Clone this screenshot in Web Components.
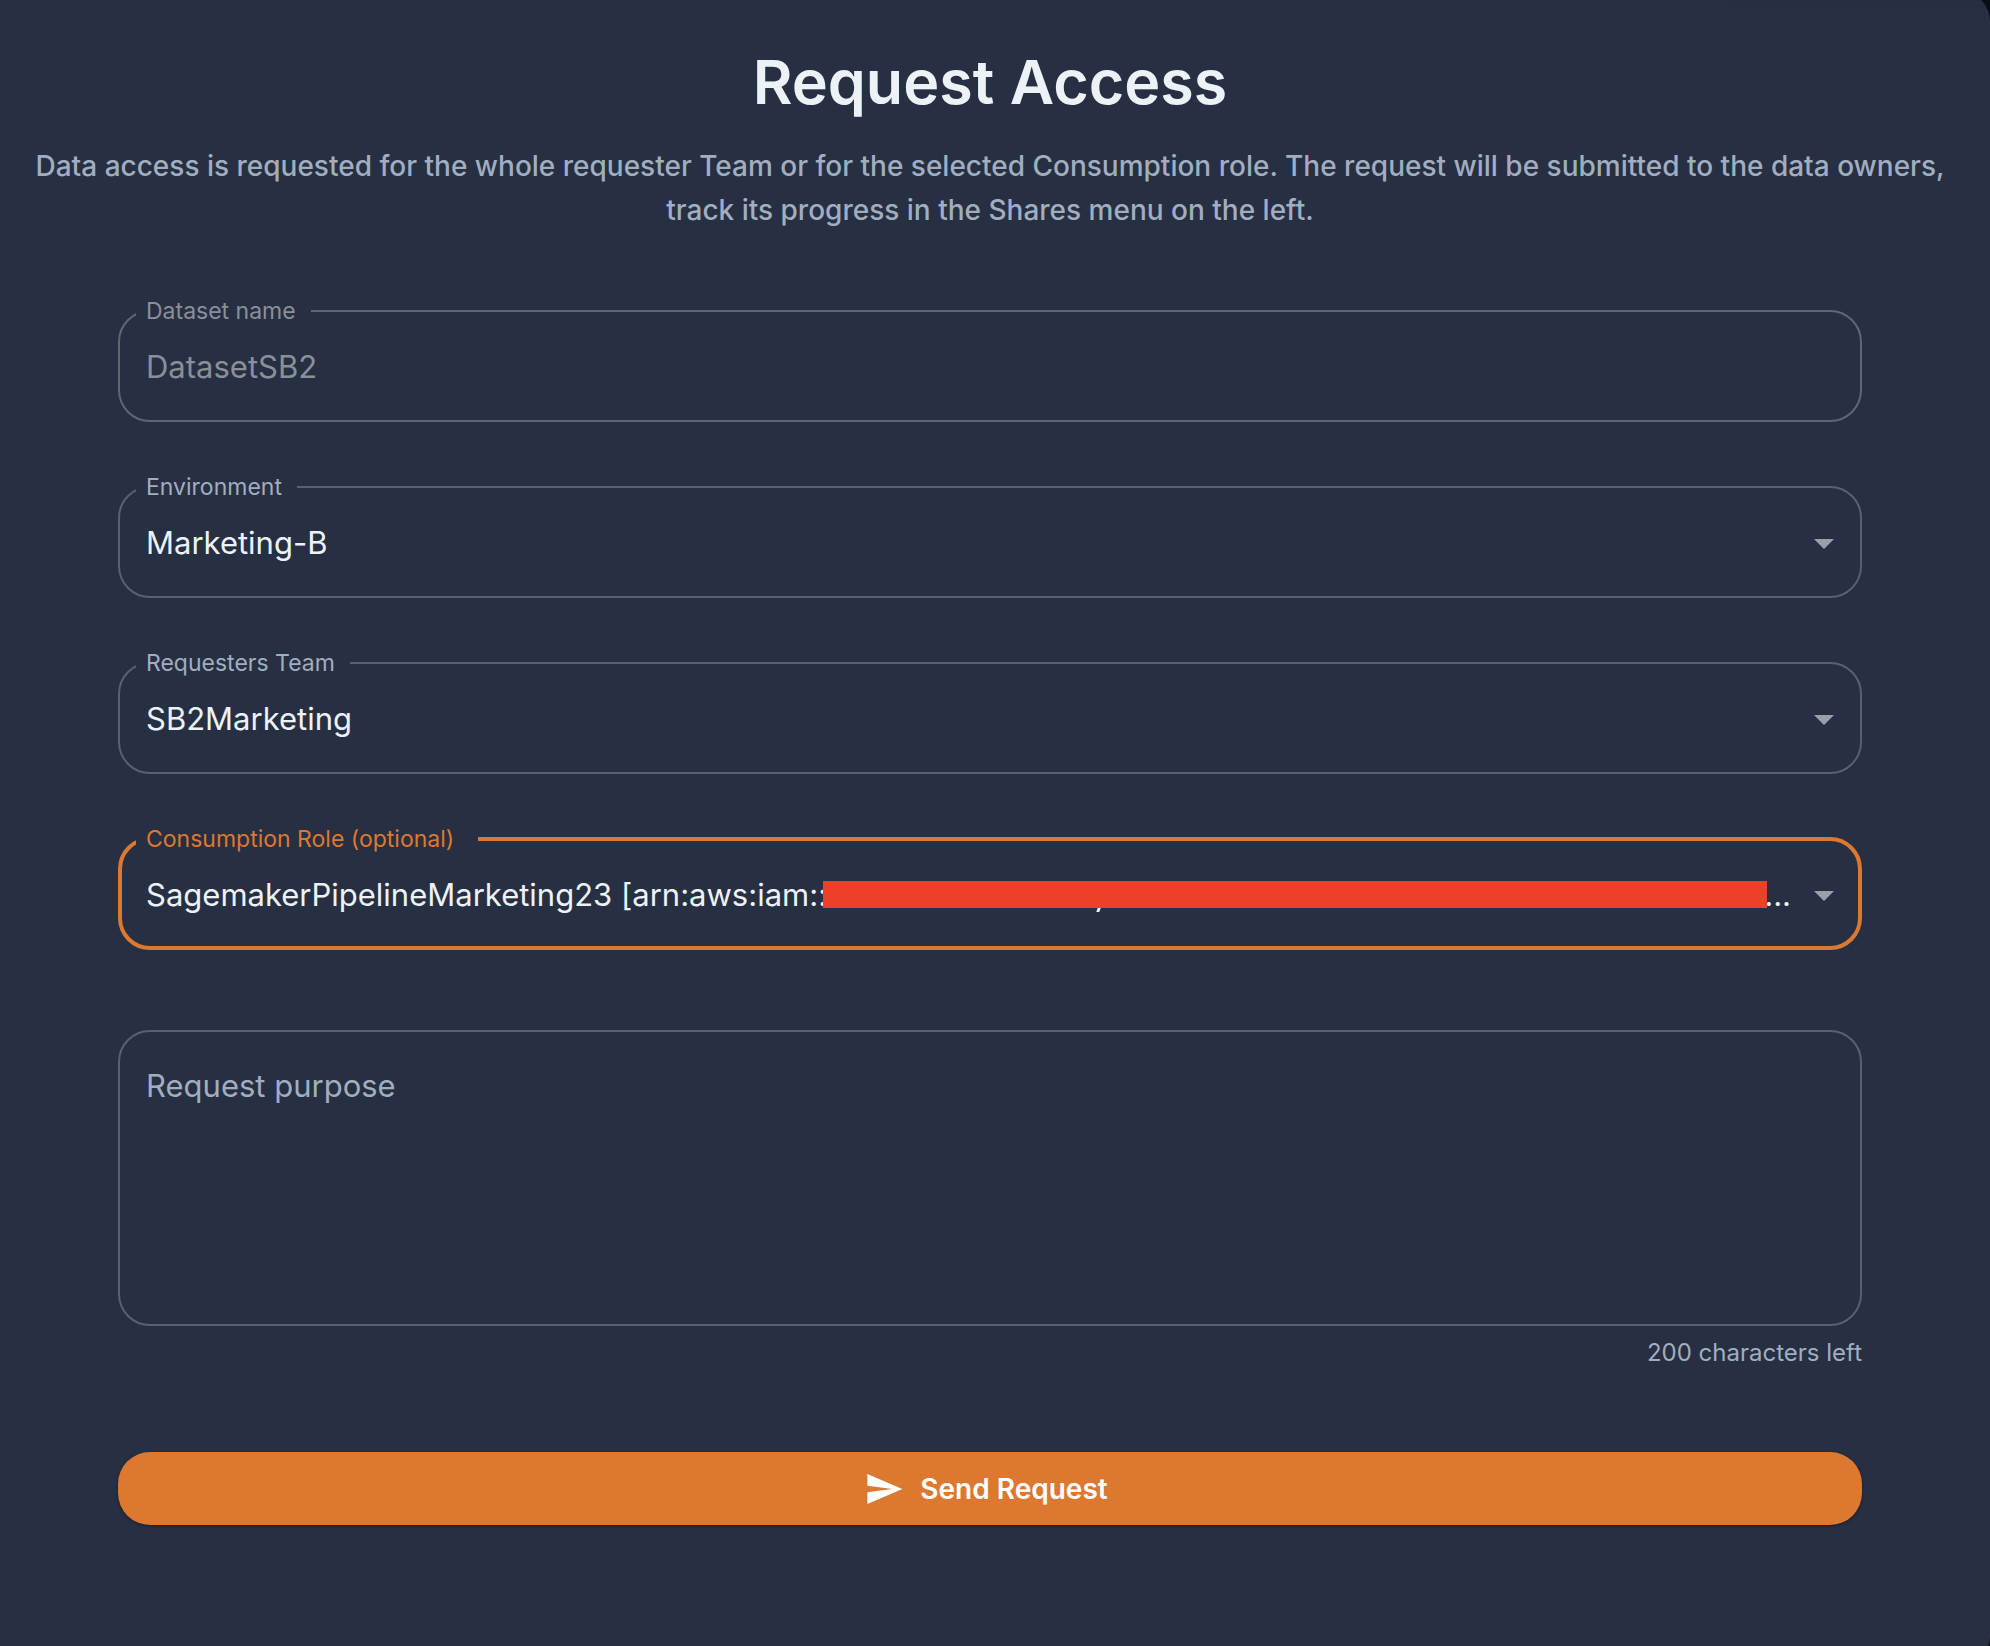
<!DOCTYPE html>
<html lang="en">
<head>
<meta charset="utf-8">
<meta name="viewport" content="width=device-width, initial-scale=1">
<title>Request Access</title>
<style>
  html, body { margin: 0; background: #0a0d13; }
  body {
    font-family: Inter, "Liberation Sans", sans-serif;
    color: #edf2f7;
    --surface: #272f42;
    --muted: #a0aec0;
    --disabled: #8a8f99;
    --outline: #586170;
    --accent: #dd7831;
    --icon: #9ca0ac;
    --redact: #ec4128;
  }
</style>
</head>
<body>
<request-dialog>
  <dialog-heading slot="heading">
    <span slot="title">Request Access</span>
    Data access is requested for the whole requester Team or for the selected Consumption role. The request will be submitted to the data owners, track its progress in the Shares menu on the left.
  </dialog-heading>
  <text-field label="Dataset name" value="DatasetSB2" disabled></text-field>
  <select-field label="Environment" value="Marketing-B"></select-field>
  <select-field label="Requesters Team" value="SB2Marketing"></select-field>
  <select-field label="Consumption Role (optional)" value="SagemakerPipelineMarketing23 [arn:aws:iam::" active redacted></select-field>
  <purpose-field slot="purpose" placeholder="Request purpose" limit="200"></purpose-field>
  <send-button slot="action">Send Request</send-button>
</request-dialog>

<script>
  const fieldStyles = `
    :host { display: block; }
    fieldset {
      box-sizing: border-box;
      min-width: 0;
      height: 123px;
      margin: 0;
      padding: 0 12px 10px 16px;
      border: 2px solid var(--outline);
      border-radius: 32px;
      display: flex;
      align-items: center;
    }
    legend {
      height: 24px;
      padding: 0 15px 0 10px;
      font-size: 23px;
      line-height: 24px;
      color: var(--muted);
    }
    input, select {
      appearance: none;
      flex: 1;
      min-width: 0;
      height: 48px;
      margin: 0;
      padding: 0 0 0 10px;
      border: 0;
      outline: 0;
      background: transparent;
      color: inherit;
      font: inherit;
      font-size: 31px;
      line-height: 48px;
      opacity: 1;
    }
    option { background: var(--surface); }
  `;

  class RequestDialog extends HTMLElement {
    constructor() {
      super();
      this.attachShadow({ mode: 'open' }).innerHTML = `
        <style>
          :host { display: flex; min-height: 100vh; overflow: hidden; }
          main {
            flex: 1;
            min-width: 0;
            box-sizing: border-box;
            margin: -10px 0 -22px -10px;
            padding: 50px 32px;
            border-radius: 32px;
            background: linear-gradient(to right, transparent, #252e3e 48px) no-repeat right top / 280px 20px var(--surface);
          }
          form { padding: 0 96px; }
          .fields { display: flex; flex-direction: column; gap: 53px; padding-top: 67px; }
          .purpose { padding-top: 80px; }
          .action { padding-top: 80px; }
        </style>
        <main>
          <slot name="heading"></slot>
          <form>
            <div class="fields"><slot></slot></div>
            <div class="purpose"><slot name="purpose"></slot></div>
            <div class="action"><slot name="action"></slot></div>
          </form>
        </main>`;
    }
  }

  class DialogHeading extends HTMLElement {
    constructor() {
      super();
      this.attachShadow({ mode: 'open' }).innerHTML = `
        <style>
          :host { display: block; text-align: center; }
          h1 { margin: 0; font-size: 61px; line-height: 84px; font-weight: 600; }
          p { margin: 0; padding-top: 20px; font-size: 28px; line-height: 44px; font-weight: 500; color: var(--muted); }
        </style>
        <h1><slot name="title"></slot></h1>
        <p><slot></slot></p>`;
    }
  }

  class TextField extends HTMLElement {
    connectedCallback() {
      const root = this.attachShadow({ mode: 'open' });
      root.innerHTML = `
        <style>
          ${fieldStyles}
          :host([disabled]) fieldset { border-color: #5f6774; }
          :host([disabled]) legend, input:disabled { color: var(--disabled); }
        </style>
        <fieldset>
          <legend><label for="control"></label></legend>
          <input id="control" type="text">
        </fieldset>`;
      root.querySelector('label').textContent = this.getAttribute('label');
      const input = root.querySelector('input');
      input.value = this.getAttribute('value');
      input.disabled = this.hasAttribute('disabled');
    }
  }

  class SelectField extends HTMLElement {
    connectedCallback() {
      const root = this.attachShadow({ mode: 'open' });
      const mask = '<span class="mask"></span><span class="more">...</span>';
      root.innerHTML = `
        <style>
          ${fieldStyles}
          :host([active]) fieldset { border: 4px solid var(--accent); padding: 0 10px 8px 14px; }
          :host([active]) legend { color: var(--accent); padding-right: 24px; }
          :host([redacted]) select { flex: none; field-sizing: content; }
          .mask {
            flex: 1;
            height: 27px;
            margin: 0 -3px 0 -4px;
            background: var(--redact);
            z-index: 1;
          }
          .mask::after {
            content: "";
            display: block;
            width: 3px;
            height: 4px;
            margin: 27px 0 0 29%;
            background: currentColor;
            transform: skewX(-20deg);
          }
          .more { font-size: 31px; line-height: 48px; padding-right: 9px; }
          svg { flex: none; width: 48px; height: 48px; fill: var(--icon); }
        </style>
        <fieldset>
          <legend><label for="control"></label></legend>
          <select id="control"><option selected></option></select>
          ${this.hasAttribute('redacted') ? mask : ''}
          <svg viewBox="0 0 24 24" aria-hidden="true"><path d="M7 10l5 5 5-5z"/></svg>
        </fieldset>`;
      root.querySelector('label').textContent = this.getAttribute('label');
      root.querySelector('option').textContent = this.getAttribute('value');
    }
  }

  class PurposeField extends HTMLElement {
    connectedCallback() {
      const root = this.attachShadow({ mode: 'open' });
      root.innerHTML = `
        <style>
          :host { display: block; }
          textarea {
            display: block;
            box-sizing: border-box;
            width: 100%;
            height: 296px;
            margin: 0;
            padding: 31px 26px;
            border: 2px solid var(--outline);
            border-radius: 32px;
            outline: 0;
            resize: none;
            background: transparent;
            color: inherit;
            font: inherit;
            font-size: 31px;
            line-height: 46px;
          }
          textarea::placeholder { color: var(--muted); opacity: 1; }
          output { display: block; padding-top: 8px; font-size: 24px; line-height: 38px; text-align: right; color: var(--muted); }
        </style>
        <textarea id="purpose"></textarea>
        <output for="purpose"></output>`;
      const area = root.querySelector('textarea');
      const left = root.querySelector('output');
      const limit = Number(this.getAttribute('limit'));
      const update = () => { left.textContent = `${limit - area.value.length} characters left`; };
      area.placeholder = this.getAttribute('placeholder');
      area.setAttribute('aria-label', area.placeholder);
      area.maxLength = limit;
      area.addEventListener('input', update);
      update();
    }
  }

  class SendButton extends HTMLElement {
    constructor() {
      super();
      this.attachShadow({ mode: 'open' }).innerHTML = `
        <style>
          :host { display: block; }
          button {
            display: flex;
            align-items: center;
            justify-content: center;
            gap: 16px;
            width: 100%;
            height: 73px;
            margin: 0;
            padding: 0 32px;
            border: 0;
            border-radius: 32px;
            background: var(--accent);
            box-shadow: 0 1px 3px rgba(0, 0, 0, .4);
            color: #fff;
            font: inherit;
            font-size: 28px;
            font-weight: 600;
            line-height: 48px;
          }
          svg { width: 40px; height: 40px; margin-left: -8px; fill: currentColor; }
        </style>
        <button type="button">
          <svg viewBox="0 0 24 24" aria-hidden="true"><path d="M2.01 21 23 12 2.01 3 2 10l15 2-15 2z"/></svg>
          <slot></slot>
        </button>`;
    }
  }

  customElements.define('request-dialog', RequestDialog);
  customElements.define('dialog-heading', DialogHeading);
  customElements.define('text-field', TextField);
  customElements.define('select-field', SelectField);
  customElements.define('purpose-field', PurposeField);
  customElements.define('send-button', SendButton);
</script>
</body>
</html>
